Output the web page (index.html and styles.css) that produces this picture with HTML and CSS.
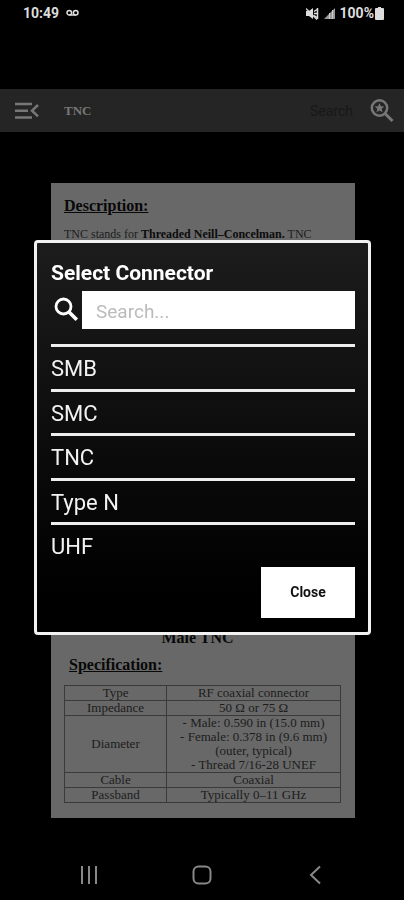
FILE: index.html
```html
<!DOCTYPE html>
<html lang="en">
<head>
<meta charset="utf-8">
<meta name="viewport" content="width=device-width, initial-scale=1">
<title>TNC</title>
<link rel="stylesheet" href="styles.css">
</head>
<body>
<div class="screen">
  <header class="status">
    <span>10:49</span>
    <svg class="voicemail" width="13" height="8" viewBox="0 0 13 8" fill="none" stroke="currentColor" stroke-width="1.5"><circle cx="3.3" cy="3.7" r="2.3"/><circle cx="9.7" cy="3.7" r="2.3"/><path d="M3.3 6h6.4"/></svg>
    <span class="status-right">
      <svg width="13" height="13" viewBox="0 0 13 13"><path fill="currentColor" d="M0 4h3l4-3v11L3 9H0z"/><path d="M8 4.500l3-2M8 6.500h4M8 8.500l3 2M11.500 1v11" stroke="currentColor" stroke-width="1.500"/><path d="M0 1.500l11 11" stroke="currentColor" stroke-width="1.300"/></svg>
      <svg class="signal" width="11" height="11" viewBox="0 0 11 11"><path fill="#999" d="M0 11L11 0v11z"/><path d="M5.500 5v6M8.500 2v9" stroke="#ccc"/></svg>
      <span class="charge">100%<svg width="9" height="13" viewBox="0 0 9 13"><path fill="currentColor" d="M3 0h3v1h2q1 0 1 1v10q0 1-1 1H1q-1 0-1-1V2q0-1 1-1h2z"/></svg></span>
    </span>
  </header>

  <nav class="toolbar">
    <button class="icon-button" aria-label="Open menu"><svg width="26" height="18" viewBox="0 0 26 18" fill="none" stroke="currentColor" stroke-width="2.500"><path d="M1 2h17M1 8.700h13M1 15.500h17M24 3l-6 5.700 6 5.700"/></svg></button>
    <h1>TNC</h1>
    <input class="toolbar-search" type="text" placeholder="Search" aria-label="Search page">
    <button class="icon-button" aria-label="Find"><svg width="24" height="24" viewBox="0 0 24 24" fill="none" stroke="currentColor"><circle cx="9.500" cy="9" r="7.700" stroke-width="2.500"/><path d="M15 14.500l7.500 7.500" stroke-width="3"/><path fill="currentColor" stroke="none" d="M9.500 4l1.400 3.200 3.400.3-2.600 2.300.8 3.400-3-1.800-3 1.800.8-3.400L4.700 7.500l3.400-.3z"/></svg></button>
  </nav>

  <main class="content">
    <article class="paper">
      <h2>Description:</h2>
      <p class="intro">TNC stands for <b>Threaded Neill–Concelman.</b> TNC</p>
      <h3>Male TNC</h3>
      <h2 class="spec-title">Specification:</h2>
      <table>
        <tr><td class="label">Type</td><td>RF coaxial connector</td></tr>
        <tr><td class="label">Impedance</td><td>50 Ω or 75 Ω</td></tr>
        <tr><td class="label">Diameter</td><td>- Male: 0.590 in (15.0 mm)<br>- Female: 0.378 in (9.6 mm)<br>(outer, typical)<br>- Thread 7/16-28 UNEF</td></tr>
        <tr><td class="label">Cable</td><td>Coaxial</td></tr>
        <tr><td class="label">Passband</td><td>Typically 0–11 GHz</td></tr>
      </table>
    </article>
  </main>

  <footer class="system-nav">
    <button aria-label="Recent apps"><svg width="20" height="20" viewBox="0 0 20 20" stroke="currentColor" stroke-width="2"><path d="M3 1v18M10 1v18M17 1v18"/></svg></button>
    <button aria-label="Home"><svg width="20" height="20" viewBox="0 0 20 20" fill="none" stroke="currentColor" stroke-width="2"><rect x="1.500" y="1.500" width="17" height="17" rx="5"/></svg></button>
    <button aria-label="Back"><svg width="20" height="20" viewBox="0 0 20 20" fill="none" stroke="currentColor" stroke-width="2"><path d="M15 1.500L6 10l9 8.500"/></svg></button>
  </footer>
</div>

<div class="overlay">
  <section class="dialog" role="dialog" aria-labelledby="dialog-title">
    <h2 id="dialog-title">Select Connector</h2>
    <div class="search-row">
      <label for="connector-search" aria-label="Search connectors"><svg width="25" height="25" viewBox="0 0 25 25" fill="none" stroke="currentColor"><circle cx="9.500" cy="9.500" r="7.500" stroke-width="2.800"/><path d="M15 15l7.800 7.800" stroke-width="3.600"/></svg></label>
      <input id="connector-search" type="text" placeholder="Search...">
    </div>
    <ul class="options">
      <li><button>SMB</button></li>
      <li><button>SMC</button></li>
      <li><button>TNC</button></li>
      <li><button>Type N</button></li>
      <li><button>UHF</button></li>
    </ul>
    <button class="close">Close</button>
  </section>
</div>
</body>
</html>
```
FILE: styles.css
```css
* { box-sizing: border-box; }

body {
  margin: 0;
  background: #000;
  font-family: Roboto, sans-serif;
}

h1, h2, h3, p, ul { margin: 0; padding: 0; }

button {
  padding: 0;
  border: 0;
  background: none;
  color: inherit;
  font: inherit;
}

svg { display: block; }

.screen {
  display: flex;
  flex-direction: column;
  min-height: 100vh;
}

.status {
  display: flex;
  align-items: center;
  gap: 7px;
  height: 26px;
  margin-bottom: 63px;
  padding: 0 20px 0 23px;
  color: #ddd;
  font-size: 14px;
  font-weight: 700;
}

.status-right {
  display: flex;
  align-items: center;
  gap: 5px;
  margin-left: auto;
}

.charge {
  display: flex;
  align-items: center;
  gap: 1px;
}

.toolbar {
  display: flex;
  align-items: center;
  height: 43px;
  padding: 0 10px 0 14px;
  background: #252525;
  color: #777;
}

.toolbar h1 {
  margin-left: 24px;
  font: bold 13px "Liberation Serif", serif;
}

.toolbar-search {
  flex: 1;
  min-width: 0;
  margin-right: 17px;
  padding: 0;
  border: 0;
  background: none;
  color: #111;
  font: 14px Roboto, sans-serif;
  text-align: right;
}

.toolbar-search::placeholder { color: #181818; }

.content {
  flex: 1;
  padding: 51px 49px 32px 51px;
}

.paper {
  padding: 12px 14px 15px 13px;
  background: #686868;
  color: #1c1c1c;
  font-family: "Liberation Serif", serif;
  font-size: 13px;
}

.paper h2, .paper h3 {
  color: #080808;
  font-size: 16px;
  line-height: 22px;
}

.paper h2 { text-decoration: underline; }

.intro {
  height: 401px;
  margin-top: 9px;
  font-size: 12px;
  line-height: 16px;
}

.intro b { color: #0c0c0c; }

.paper h3 {
  padding-right: 10px;
  text-align: center;
}

.paper .spec-title {
  margin: 5px 0 9px 5px;
}

.paper table {
  width: 100%;
  border-collapse: collapse;
  line-height: 14px;
  text-align: center;
}

.paper td {
  padding: 0;
  border: 1px solid #3a3a3a;
}

.paper .label { width: 37%; }

.system-nav {
  display: flex;
  justify-content: space-between;
  align-items: center;
  height: 50px;
  padding: 0 79px;
  color: #888;
}

.overlay {
  position: fixed;
  inset: 0;
  display: flex;
  justify-content: center;
  align-items: center;
  padding: 0 33px 26px 34px;
}

.dialog {
  display: flex;
  flex-direction: column;
  width: 100%;
  padding: 16px 13px 14px 14px;
  border: 3px solid #f2f2f2;
  border-radius: 4px;
  background: linear-gradient(#1c1c1c, #000 90%);
  color: #f2f2f2;
}

.dialog h2 {
  margin-bottom: 4px;
  color: #fff;
  font-size: 21px;
  line-height: 28px;
}

.search-row {
  display: flex;
  align-items: center;
  margin-bottom: 15px;
}

.search-row label {
  padding: 0 3px;
  color: #fff;
}

.search-row input {
  flex: 1;
  min-width: 0;
  height: 38px;
  padding: 3px 14px 0;
  border: 0;
  background: #fff;
  color: #222;
  font: 19px Roboto, sans-serif;
}

.search-row input::placeholder { color: #bbb; }

.options { list-style: none; }

.options li {
  height: 44px;
  border-top: 3px solid #eee;
}

.options li:nth-child(odd) { height: 45px; }

.options button {
  width: 100%;
  height: 100%;
  padding-top: 2px;
  font-size: 22px;
  text-align: left;
}

.close {
  align-self: flex-end;
  width: 94px;
  height: 51px;
  background: #fff;
  color: #111;
  font-size: 14px;
  font-weight: 700;
}
```
